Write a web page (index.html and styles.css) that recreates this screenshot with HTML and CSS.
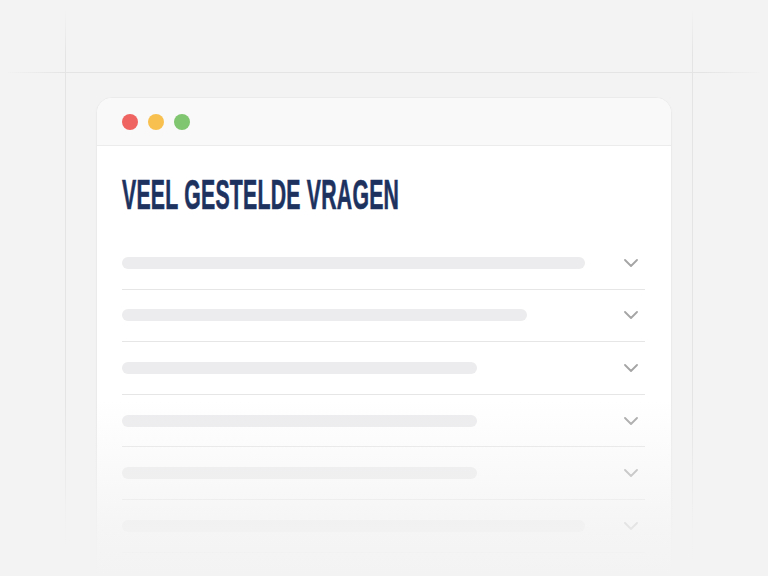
FILE: index.html
```html
<!DOCTYPE html>
<html lang="nl">
<head>
<meta charset="utf-8">
<title>Veel gestelde vragen</title>
<link rel="stylesheet" href="styles.css">
</head>
<body>
<div class="stage">
  <div class="guide guide-v guide-left"></div>
  <div class="guide guide-v guide-right"></div>
  <div class="guide guide-h"></div>

  <div class="window">
    <div class="titlebar">
      <span class="dot dot-red"></span>
      <span class="dot dot-yellow"></span>
      <span class="dot dot-green"></span>
    </div>
    <div class="content">
      <h1 class="title"><span class="title-text">VEEL GESTELDE VRAGEN</span></h1>
      <ul class="faq">
        <li class="faq-row"><span class="bar" style="width:463px"></span><svg class="chev" viewBox="0 0 14 8"><polyline points="1,1 7,7 13,1"/></svg></li>
        <li class="faq-row"><span class="bar" style="width:405px"></span><svg class="chev" viewBox="0 0 14 8"><polyline points="1,1 7,7 13,1"/></svg></li>
        <li class="faq-row"><span class="bar" style="width:355px"></span><svg class="chev" viewBox="0 0 14 8"><polyline points="1,1 7,7 13,1"/></svg></li>
        <li class="faq-row"><span class="bar" style="width:355px"></span><svg class="chev" viewBox="0 0 14 8"><polyline points="1,1 7,7 13,1"/></svg></li>
        <li class="faq-row"><span class="bar" style="width:355px"></span><svg class="chev" viewBox="0 0 14 8"><polyline points="1,1 7,7 13,1"/></svg></li>
        <li class="faq-row"><span class="bar" style="width:463px"></span><svg class="chev" viewBox="0 0 14 8"><polyline points="1,1 7,7 13,1"/></svg></li>
      </ul>
    </div>
  </div>

  <div class="fade"></div>
</div>
</body>
</html>
```

FILE: styles.css
```css
* { box-sizing: border-box; }

html, body {
  margin: 0;
  padding: 0;
  background: #f3f3f3;
  font-family: "Liberation Sans", Arial, sans-serif;
}

.stage {
  position: relative;
  width: 768px;
  height: 576px;
  overflow: hidden;
  padding: 97px 0 0 96px;
}

.guide {
  position: absolute;
}

.guide-v {
  top: 10px;
  width: 1px;
  height: 560px;
  background: linear-gradient(to bottom, rgba(225,225,225,0) 0%, #e4e4e4 8%, #e4e4e4 85%, rgba(225,225,225,0) 100%);
}

.guide-left { left: 65px; }
.guide-right { left: 692px; }

.guide-h {
  top: 72px;
  left: 4px;
  width: 760px;
  height: 1px;
  background: linear-gradient(to right, rgba(225,225,225,0) 0%, #e4e4e4 8%, #e4e4e4 92%, rgba(225,225,225,0) 100%);
}

.window {
  position: relative;
  width: 576px;
  height: 500px;
  background: #ffffff;
  border: 1px solid #ebebeb;
  border-radius: 16px 16px 0 0;
  overflow: hidden;
  box-shadow: 0 1px 3px rgba(0,0,0,0.02);
}

.titlebar {
  height: 48px;
  display: flex;
  align-items: center;
  gap: 10px;
  padding: 0 25px;
  background: #f9f9f9;
  border-bottom: 1px solid #ececec;
}

.dot {
  width: 16px;
  height: 16px;
  border-radius: 50%;
}

.dot-red { background: #ef6461; }
.dot-yellow { background: #f8c04f; }
.dot-green { background: #80c56f; }

.content {
  padding: 0 26px 0 25px;
}

.title {
  margin: 27px 0 0;
  height: 43px;
  font-family: "Liberation Sans", Arial, sans-serif;
  font-weight: 700;
  font-size: 43px;
  line-height: 43px;
  color: #1d325f;
  white-space: nowrap;
}

.title-text {
  display: inline-block;
  transform-origin: left center;
  transform: scaleX(0.494);
  letter-spacing: 0.5px;
  -webkit-text-stroke: 0.7px #1d325f;
}

.faq {
  list-style: none;
  margin: 21px 0 0;
  padding: 0;
}

.faq-row {
  height: 52.6px;
  display: flex;
  align-items: center;
  justify-content: space-between;
  padding-right: 7px;
  border-bottom: 1px solid #e6e6e6;
}

.bar {
  display: block;
  height: 12px;
  border-radius: 6px;
  background: #ececee;
}

.chev {
  width: 14px;
  height: 8px;
  fill: none;
  stroke: #a5a5a5;
  stroke-width: 1.8;
  stroke-linecap: round;
  stroke-linejoin: round;
}

.fade {
  position: absolute;
  left: 0;
  right: 0;
  top: 400px;
  height: 176px;
  background: linear-gradient(to bottom, rgba(243,243,243,0) 0%, rgba(243,243,243,0.45) 40%, rgba(243,243,243,0.85) 75%, #f3f3f3 100%);
}
```
